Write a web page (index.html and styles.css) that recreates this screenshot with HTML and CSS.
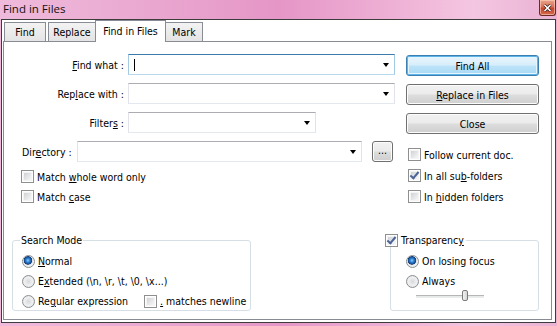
FILE: index.html
```html
<!DOCTYPE html>
<html lang="en">
<head>
    <meta charset="UTF-8">
    <title>Find in Files</title>
    <link rel="stylesheet" href="styles.css">
</head>
<body>
<div class="window">
    <div class="titlebar">
        <span class="title">Find in Files</span>
        <span class="close-btn">
            <svg width="9" height="8" viewBox="0 0 9 8"><path d="M1.5 1 L7.5 7 M7.5 1 L1.5 7" stroke="#3a1a12" stroke-width="3"/><path d="M1.5 1 L7.5 7 M7.5 1 L1.5 7" stroke="#fff" stroke-width="1.6"/></svg>
        </span>
    </div>
    <div class="client">
        <ul class="tabs">
            <li class="tab-find">Find</li>
            <li class="tab-replace">Replace</li>
            <li class="tab-files selected">Find in Files</li>
            <li class="tab-mark">Mark</li>
        </ul>
        <div class="panel">
            <div class="top">
                <div class="form">
                    <div class="row">
                        <label class="lbl"><u>F</u>ind what :</label>
                        <div class="combo focused long"><span class="caret"></span><span class="arrow"></span></div>
                    </div>
                    <div class="row">
                        <label class="lbl">Rep<u>l</u>ace with :</label>
                        <div class="combo long"><span class="arrow"></span></div>
                    </div>
                    <div class="row">
                        <label class="lbl">Filter<u>s</u> :</label>
                        <div class="combo short"><span class="arrow"></span></div>
                    </div>
                    <div class="row dir-row">
                        <label class="dir-lbl">Dir<u>e</u>ctory :</label>
                        <div class="combo dir"><span class="arrow"></span></div>
                        <span class="btn browse">...</span>
                    </div>
                    <div class="checks left-checks">
                        <div class="opt"><span class="check"></span><span>Match <u>w</u>hole word only</span></div>
                        <div class="opt"><span class="check"></span><span>Match <u>c</u>ase</span></div>
                    </div>
                </div>
                <div class="side">
                    <span class="btn default">Find All</span>
                    <span class="btn"><span><u>R</u>eplace in Files</span></span>
                    <span class="btn">Close</span>
                    <div class="checks right-checks">
                        <div class="opt"><span class="check"></span><span>Follow current doc.</span></div>
                        <div class="opt"><span class="check checked"></span><span>In all su<u>b</u>-folders</span></div>
                        <div class="opt"><span class="check"></span><span>In <u>h</u>idden folders</span></div>
                    </div>
                </div>
            </div>
            <div class="bottom">
                <fieldset class="group mode">
                    <legend>Search Mode</legend>
                    <div class="opt"><span class="radio on"></span><span><u>N</u>ormal</span></div>
                    <div class="opt"><span class="radio"></span><span>E<u>x</u>tended (\n, \r, \t, \0, \x...)</span></div>
                    <div class="opt"><span class="radio"></span><span>Re<u>g</u>ular expression</span><span class="check newline"></span><span><u>.</u> matches newline</span></div>
                </fieldset>
                <fieldset class="group trans">
                    <legend><span class="check checked"></span><span>Transparenc<u>y</u></span></legend>
                    <div class="opt"><span class="radio on"></span><span>On losing focus</span></div>
                    <div class="opt"><span class="radio"></span><span>Always</span></div>
                    <div class="slider"><span class="thumb"></span></div>
                </fieldset>
            </div>
        </div>
    </div>
</div>
</body>
</html>
```

FILE: styles.css
```css
*{
    margin: 0;
    padding: 0;
    box-sizing: border-box;
}
html, body{
    width: 557px;
    height: 326px;
    overflow: hidden;
}
body{
    font-family: "DejaVu Sans Condensed", "DejaVu Sans", sans-serif;
    font-stretch: condensed;
    font-size: 10.5px;
    color: #000;
}
li{
    list-style: none;
}
u{
    text-decoration: underline;
    text-underline-offset: 1px;
}

/* window frame */
.window{
    width: 557px;
    height: 326px;
    display: flex;
    flex-direction: column;
    background: linear-gradient(90deg, #efbadb 0%, #eaa9d1 25%, #e596c6 50%, #eeb0d5 70%, #f4c6e1 85%, #eab2d4 100%);
}
.titlebar{
    height: 19px;
    display: flex;
    align-items: flex-start;
    justify-content: space-between;
}
.title{
    font-family: "Open Sans", sans-serif;
    font-stretch: normal;
    font-size: 11.5px;
    line-height: 17px;
    margin-left: 3px;
    color: #111;
}
.close-btn{
    width: 17px;
    height: 16px;
    margin-right: 1px;
    border: 1px solid #6b2b22;
    border-top: none;
    border-radius: 0 0 3px 3px;
    background: linear-gradient(#e9a48c 0%, #d9715a 45%, #c7452d 55%, #d46a4c 100%);
    box-shadow: inset 0 0 0 1px rgba(255, 210, 190, 0.6);
    display: flex;
    align-items: center;
    justify-content: center;
}
.client{
    flex: 1;
    margin: 0 1px 3px;
    border: 1px solid #3c3c3c;
    background: #fff;
}

/* tabs */
.tabs{
    display: flex;
    height: 22px;
    padding-left: 2px;
    margin-bottom: -1px;
    position: relative;
    z-index: 1;
}
.tabs li{
    height: 19px;
    margin-top: 2px;
    border: 1px solid #898c95;
    border-bottom: none;
    background: linear-gradient(#f3f3f3, #e4e4e4);
    line-height: 18px;
    text-align: center;
}
.tabs .tab-find{
    width: 42px;
    margin-right: 2px;
}
.tabs .tab-replace{
    width: 47px;
    border-right: none;
}
.tabs .tab-files{
    width: 71px;
}
.tabs .tab-mark{
    width: 37px;
    border-left: none;
}
.tabs li.selected{
    height: 22px;
    margin-top: 0;
    background: #fff;
    line-height: 20px;
}
.panel{
    margin-left: 1px;
    width: 549px;
    height: 279px;
    border: 1px solid #898c95;
}

/* upper part */
.top{
    height: 192px;
    padding-top: 12px;
    display: flex;
}
.form{
    width: 391px;
}
.row{
    display: flex;
    align-items: center;
    height: 21px;
    margin-bottom: 8px;
}
.lbl{
    width: 120px;
    margin-right: 4px;
    text-align: right;
}
.combo{
    position: relative;
    height: 21px;
    border: 1px solid #e2e3ea;
    border-top-color: #abadb3;
    border-bottom-color: #e3e9ef;
    background: #fff;
}
.combo.focused{
    border-color: #a4c9e3;
    border-top-color: #3d7bad;
    border-bottom-color: #b7d9ed;
}
.combo.long{
    width: 267px;
}
.combo.short{
    width: 188px;
}
.combo.dir{
    width: 285px;
}
.arrow{
    position: absolute;
    right: 5px;
    top: 8px;
    border-left: 3.5px solid transparent;
    border-right: 3.5px solid transparent;
    border-top: 4px solid #000;
}
.caret{
    position: absolute;
    left: 5px;
    top: 4px;
    width: 1px;
    height: 12px;
    background: #000;
}
.dir-row{
    padding-left: 18px;
}
.dir-lbl{
    width: 55px;
}
.btn{
    display: flex;
    align-items: center;
    justify-content: center;
    height: 21px;
    border: 1px solid #707070;
    border-radius: 3px;
    background: linear-gradient(#f2f2f2 0%, #ebebeb 48%, #dddddd 52%, #cfcfcf 100%);
    box-shadow: inset 0 0 0 1px #fcfcfc;
}
.btn.default{
    border-color: #3c7fb1;
    background: linear-gradient(#e9f5fc 0%, #d8eefb 48%, #bde4f9 52%, #a7d8f4 100%);
    box-shadow: inset 0 0 0 1px #5cb4e8, inset 0 0 0 2px #e6f4fc;
}
.browse{
    width: 21px;
    margin-left: 10px;
    padding-bottom: 3px;
}

/* checkboxes and radios */
.opt{
    display: flex;
    align-items: center;
    height: 13px;
    white-space: nowrap;
}
.check{
    width: 13px;
    height: 13px;
    flex: none;
    margin-right: 3px;
    border: 1px solid #8e8f8f;
    padding: 2px;
    background: linear-gradient(135deg, #cfd2d6, #f7f7f7) content-box, #f4f4f4;
    box-shadow: inset 0 0 0 1px #fff;
    position: relative;
}
.check.checked::after{
    content: "";
    position: absolute;
    left: 3px;
    top: 0;
    width: 3px;
    height: 7px;
    border: solid #4c6398;
    border-width: 0 2px 2px 0;
    transform: rotate(40deg);
}
.radio{
    width: 13px;
    height: 13px;
    flex: none;
    margin-right: 3px;
    border-radius: 50%;
    border: 1px solid #8c8e90;
    background: radial-gradient(circle at 50% 50%, #d6d8db 0, #eef0f1 4px, #e4e6e8 6px);
}
.radio.on{
    background: radial-gradient(circle at 45% 40%, #9bd7fb 0, #3b8fd9 1.5px, #1a58a6 3.2px, #123f7a 4px, #dde0e3 4.5px, #eef0f1 5.5px);
}
.left-checks{
    padding-left: 17px;
}
.left-checks .opt{
    margin-bottom: 7px;
}
.side{
    margin-left: 11px;
    width: 133px;
    display: flex;
    flex-direction: column;
    padding-top: 1px;
}
.side .btn{
    margin-bottom: 8px;
}
.right-checks{
    margin-top: 6px;
    padding-left: 2px;
}
.right-checks .opt{
    margin-bottom: 8px;
}

/* lower part */
.bottom{
    display: flex;
}
.group{
    min-width: 0;
    height: 77px;
    border: 1px solid #d5dfe5;
    border-radius: 3px;
    padding: 4px 0 0;
}
.group legend{
    line-height: 13px;
    height: 13px;
    display: flex;
    align-items: center;
}
.mode{
    margin-left: 8px;
    width: 239px;
    padding-left: 9px;
}
.mode legend{
    margin-left: -2px;
    padding: 0 1px;
}
.mode .opt{
    height: 20px;
}
.check.newline{
    margin-left: 16px;
}
.trans{
    margin-left: 139px;
    width: 149px;
    padding-left: 15px;
}
.trans legend{
    margin-left: -21px;
    padding-right: 2px;
}
.trans .opt{
    height: 20px;
}
.slider{
    position: relative;
    margin: 4px 0 0 10px;
    width: 68px;
    height: 3px;
    border-top: 1px solid #b6b6b6;
    border-bottom: 1px solid #ececec;
    background: #e7eaea;
}
.thumb{
    position: absolute;
    left: 46px;
    top: -6px;
    width: 6px;
    height: 11px;
    border: 1px solid #7a7a7a;
    border-radius: 2px;
    background: linear-gradient(90deg, #f2f2f2, #d6d6d6);
}
```
